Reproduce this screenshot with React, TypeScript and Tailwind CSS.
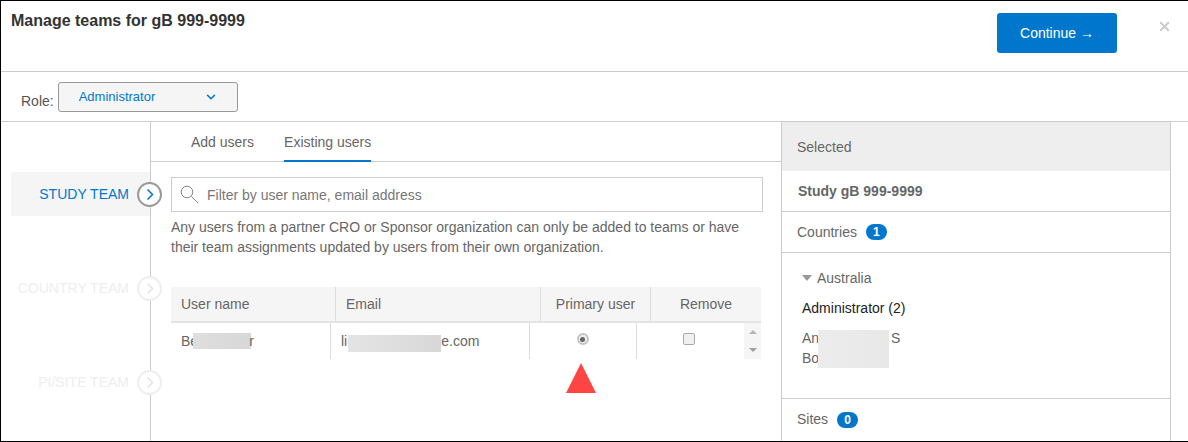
import { ChevronDown, X } from 'lucide-react'

const font = { fontFamily: '"Liberation Sans", Arial, sans-serif' }

function TeamStep({ label, active }: { label: string; active?: boolean }) {
  return (
    <div className={`relative ml-[10px] flex h-[44px] items-center justify-end pr-[21px] text-[14px] ${active ? 'bg-[#f5f5f5] text-[#0077cc]' : 'text-[#eeeeee]'}`}>
      {label}
      <span className={`absolute top-[10px] right-[-12px] flex h-[25px] w-[25px] items-center justify-center rounded-full border-2 bg-white ${active ? 'border-[#999999]' : 'border-[#eeeeee]'}`}>
        <svg width="8" height="13" viewBox="0 0 8 13" fill="none" stroke={active ? '#0077cc' : '#e4e4e4'} strokeWidth="1.5">
          <path d="M1.5 1.5 L6.5 6.5 L1.5 11.5" />
        </svg>
      </span>
    </div>
  )
}

function Badge({ value }: { value: number }) {
  return (
    <span className="inline-flex h-[16px] w-[21px] items-center justify-center rounded-full bg-[#0077cc] text-[12px] font-bold text-white">
      {value}
    </span>
  )
}

export default function App() {
  return (
    <div style={font} className="h-[442px] w-[1188px] overflow-hidden border-y border-l border-black bg-white text-[14px] text-[#666666]">
      <header className="flex h-[71px] items-start justify-between border-b border-[#cccccc]">
        <h1 className="mt-[11px] ml-[10px] text-[16px] leading-[18px] font-bold text-[#333333]">Manage teams for gB 999-9999</h1>
        <div className="flex items-start">
          <button type="button" className="mt-[12px] flex h-[40px] w-[120px] items-center justify-center rounded-[3px] bg-[#0077cc] text-[14px] text-white">
            Continue →
          </button>
          <X className="mt-[18px] mr-[16px] ml-[40px] text-[#cccccc]" size={15} strokeWidth={3} />
        </div>
      </header>

      <div className="flex h-[50px] items-start border-b border-[#cccccc] pt-[10px] pl-[20px]">
        <span className="mt-[9px] mr-[4px] leading-[20px] text-[#555555]">Role:</span>
        <div className="flex h-[30px] w-[180px] items-center justify-between rounded-[3px] border border-[#999999] bg-[#f5f5f5] pr-[19px] pl-[20px] text-[13px] text-[#0077cc]">
          Administrator
          <ChevronDown size={14} strokeWidth={2.6} />
        </div>
      </div>

      <div className="flex h-[319px]">
        <nav className="flex w-[150px] shrink-0 flex-col gap-[50px] border-r border-[#cccccc] pt-[50px]">
          <TeamStep label="STUDY TEAM" active />
          <TeamStep label="COUNTRY TEAM" />
          <TeamStep label="PI/SITE TEAM" />
        </nav>

        <main className="relative w-[631px] shrink-0 border-r border-[#cccccc]">
          <div className="flex h-[40px] gap-[30px] border-b border-[#cccccc] pl-[40px]">
            <span className="pt-[11px] leading-[18px]">Add users</span>
            <span className="h-[40px] border-b-2 border-[#0077cc] pt-[11px] leading-[18px]">Existing users</span>
          </div>

          <div className="pl-[20px]">
            <div className="mt-[15px] flex h-[35px] w-[592px] items-center border border-[#cccccc] pl-[8px]">
              <svg className="mr-[8px]" width="19" height="20" viewBox="0 0 19 20" fill="none" stroke="#888888">
                <circle cx="7" cy="7" r="5.8" />
                <path d="M11.5 11.5 L18 18" />
              </svg>
              <span className="pt-[2px] text-[#777777]">Filter by user name, email address</span>
            </div>
            <p className="mt-[5px] w-[590px] leading-[20px]">
              Any users from a partner CRO or Sponsor organization can only be added to teams or have their team assignments updated by users from their own organization.
            </p>

            <div className="mt-[30px] w-[590px]">
              <div className="flex h-[36px] items-center border-b-2 border-[#e4e4e4] bg-[#f5f5f5]">
                <div className="flex h-full w-[165px] items-center border-r border-[#dddddd] pl-[10px]">User name</div>
                <div className="flex h-full w-[205px] items-center border-r border-[#dddddd] pl-[10px]">Email</div>
                <div className="flex h-full w-[110px] items-center justify-center border-r border-[#dddddd]">Primary user</div>
                <div className="flex h-full w-[110px] items-center justify-center">Remove</div>
              </div>
              <div className="flex h-[36px]">
                <div className="flex h-full w-[160px] items-center border-r border-[#dddddd] pl-[10px]">
                  Be
                  <span className="mr-[-2px] ml-[-5px] h-[16px] w-[58px] bg-gradient-to-r from-[#dedede] to-[#d8d8d8]" />
                  r
                </div>
                <div className="flex h-full w-[199px] items-center border-r border-[#dddddd] pl-[10px]">
                  li
                  <span className="mt-[4px] ml-[1px] h-[17px] w-[93px] bg-gradient-to-r from-[#e4e4e4] to-[#d8d8d8]" />
                  e.com
                </div>
                <div className="flex h-full w-[107px] items-start justify-center border-r border-[#dddddd] pt-[10px] pr-[1px]">
                  <span className="flex h-[12px] w-[12px] items-center justify-center rounded-full border-2 border-[#c4c4c4] bg-[#eeeeee]">
                    <span className="h-[5px] w-[5px] shrink-0 rounded-full bg-[#666666]" />
                  </span>
                </div>
                <div className="flex h-full w-[107px] items-start justify-center pt-[10px] pr-[4px]">
                  <span className="h-[12px] w-[12px] rounded-[2px] border border-[#aaaaaa] bg-[#f0f0f0]" />
                </div>
                <div className="flex h-full w-[17px] flex-col items-center justify-between bg-[#f5f5f5] py-[7px]">
                  <span className="h-0 w-0 border-x-[4px] border-b-[4px] border-x-transparent border-b-[#b5b5b5]" />
                  <span className="h-0 w-0 border-x-[4px] border-t-[4px] border-x-transparent border-t-[#a0a0a0]" />
                </div>
              </div>
            </div>
          </div>

          <span className="absolute top-[241px] left-[415px] h-0 w-0 border-x-[15px] border-b-[30px] border-x-transparent border-b-[#ff4444]" />
        </main>

        <aside className="w-[389px] shrink-0 border-r border-[#cccccc]">
          <div className="flex h-[49px] items-center bg-[#eeeeee] pt-[2px] pl-[15px]">Selected</div>
          <div className="flex h-[41px] items-center border-b border-[#cccccc] pl-[16px] text-[14px] font-bold">Study gB 999-9999</div>
          <div className="flex h-[41px] items-center gap-[9px] border-b border-[#cccccc] pl-[15px]">
            Countries <Badge value={1} />
          </div>
          <div className="h-[146px] border-b border-[#cccccc] pt-[16px] pl-[20px]">
            <div className="flex h-[18px] items-center gap-[5px]">
              <span className="h-0 w-0 border-x-[5px] border-t-[6px] border-x-transparent border-t-[#999999]" />
              Australia
            </div>
            <div className="mt-[12px] leading-[18px] text-[#222222]">Administrator (2)</div>
            <div className="mt-[13px] flex items-start leading-[20px]">
              <div className="mt-[-2px] w-[16px] whitespace-nowrap">
                <div>An</div>
                <div>Bo</div>
              </div>
              <span className="h-[38px] w-[71px] bg-gradient-to-r from-[#ececec] to-[#e8e8e8]" />
              <span className="mt-[-2px] ml-[2px]">S</span>
            </div>
          </div>
          <div className="flex h-[41px] items-center gap-[9px] pl-[15px]">
            Sites <Badge value={0} />
          </div>
        </aside>
      </div>
    </div>
  )
}
